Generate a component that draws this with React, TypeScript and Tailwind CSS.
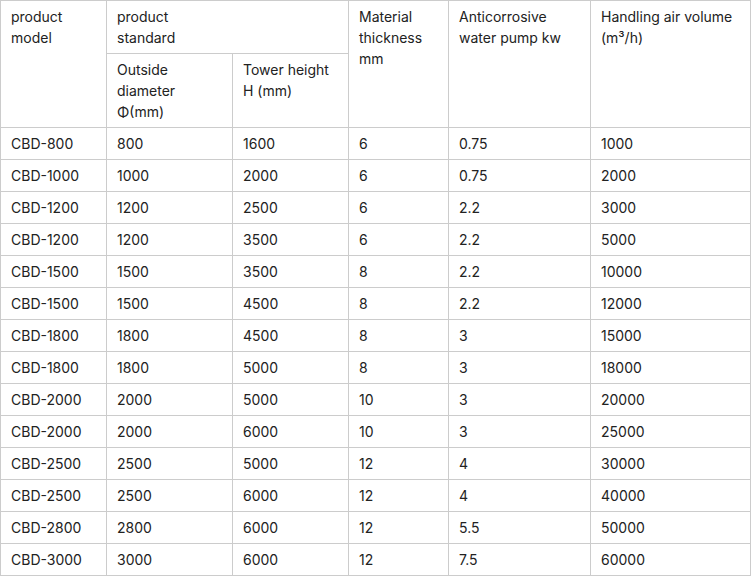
import React from "react";

const rows: string[][] = [
  ["CBD-800", "800", "1600", "6", "0.75", "1000"],
  ["CBD-1000", "1000", "2000", "6", "0.75", "2000"],
  ["CBD-1200", "1200", "2500", "6", "2.2", "3000"],
  ["CBD-1200", "1200", "3500", "6", "2.2", "5000"],
  ["CBD-1500", "1500", "3500", "8", "2.2", "10000"],
  ["CBD-1500", "1500", "4500", "8", "2.2", "12000"],
  ["CBD-1800", "1800", "4500", "8", "3", "15000"],
  ["CBD-1800", "1800", "5000", "8", "3", "18000"],
  ["CBD-2000", "2000", "5000", "10", "3", "20000"],
  ["CBD-2000", "2000", "6000", "10", "3", "25000"],
  ["CBD-2500", "2500", "5000", "12", "4", "30000"],
  ["CBD-2500", "2500", "6000", "12", "4", "40000"],
  ["CBD-2800", "2800", "6000", "12", "5.5", "50000"],
  ["CBD-3000", "3000", "6000", "12", "7.5", "60000"],
];

const cell = "border border-[#cccccc] px-[10px] py-[5px] align-top text-left font-normal";

export default function App() {
  return (
    <div className="bg-white w-[752px] h-[577px] text-[#222222] text-[14px] leading-[21px]" style={{ fontFamily: "Inter, 'Noto Sans', sans-serif" }}>
      <table className="table-fixed border-collapse w-[751px]">
        <colgroup>
          <col className="w-[106px]" />
          <col className="w-[126px]" />
          <col className="w-[116px]" />
          <col className="w-[100px]" />
          <col className="w-[142px]" />
          <col className="w-[160px]" />
        </colgroup>
        <thead>
          <tr>
            <th rowSpan={2} className={cell}>product<br />model</th>
            <th colSpan={2} className={cell}>product<br />standard</th>
            <th rowSpan={2} className={cell}>Material<br />thickness<br />mm</th>
            <th rowSpan={2} className={cell}>Anticorrosive<br />water pump kw</th>
            <th rowSpan={2} className={cell}>Handling air volume<br />(m³/h)</th>
          </tr>
          <tr>
            <th className={`${cell} h-[74px]`}>Outside<br />diameter<br />Φ(mm)</th>
            <th className={cell}>Tower height<br />H (mm)</th>
          </tr>
        </thead>
        <tbody>
          {rows.map((r, i) => (
            <tr key={i}>
              {r.map((c, j) => (
                <td key={j} className={cell}>{c}</td>
              ))}
            </tr>
          ))}
        </tbody>
      </table>
    </div>
  );
}
